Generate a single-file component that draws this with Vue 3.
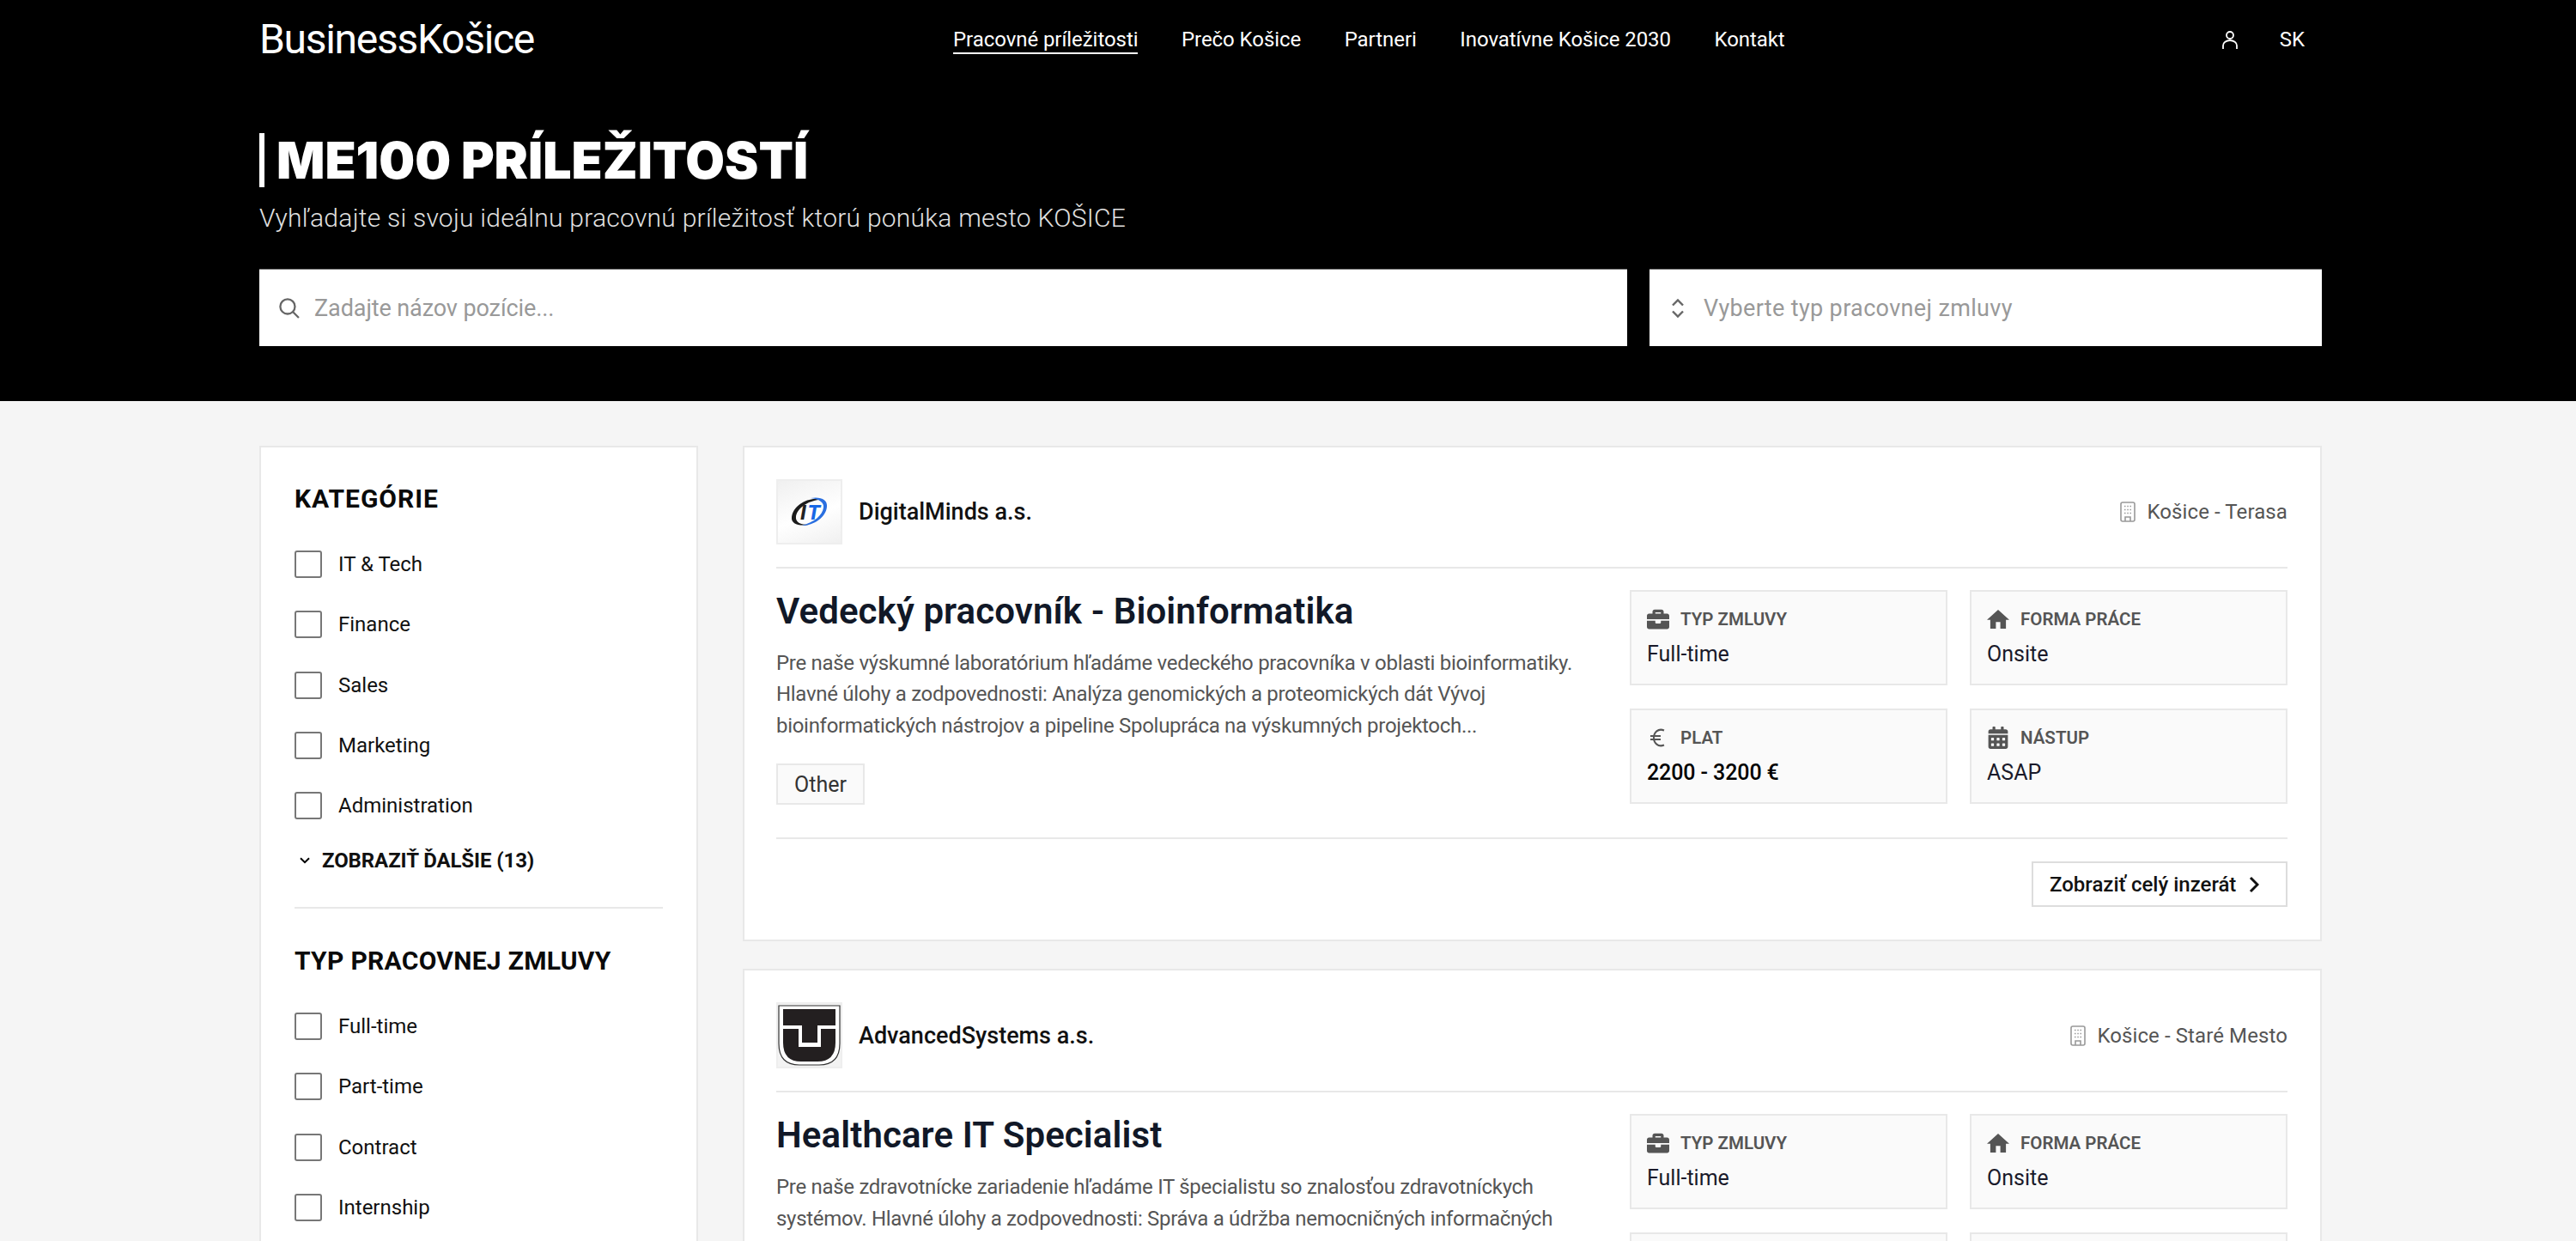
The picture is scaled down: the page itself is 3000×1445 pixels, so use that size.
<script setup>
const nav = ['Pracovné príležitosti', 'Prečo Košice', 'Partneri', 'Inovatívne Košice 2030', 'Kontakt']
const categories = ['IT & Tech', 'Finance', 'Sales', 'Marketing', 'Administration']
const contracts = ['Full-time', 'Part-time', 'Contract', 'Internship']
const jobs = [
  {
    company: 'DigitalMinds a.s.', logo: 'it', place: 'Košice - Terasa',
    title: 'Vedecký pracovník - Bioinformatika',
    lines: [
      'Pre naše výskumné laboratórium hľadáme vedeckého pracovníka v oblasti bioinformatiky.',
      'Hlavné úlohy a zodpovednosti: Analýza genomických a proteomických dát Vývoj',
      'bioinformatických nástrojov a pipeline Spolupráca na výskumných projektoch...'
    ],
    pay: '2200 - 3200 €'
  },
  {
    company: 'AdvancedSystems a.s.', logo: 'tu', place: 'Košice - Staré Mesto',
    title: 'Healthcare IT Specialist',
    lines: [
      'Pre naše zdravotnícke zariadenie hľadáme IT špecialistu so znalosťou zdravotníckych',
      'systémov. Hlavné úlohy a zodpovednosti: Správa a údržba nemocničných informačných',
      'systémov Podpora používateľov a riešenie technických problémov...'
    ],
    pay: '2000 - 3000 €'
  }
]
</script>

<template>
  <div class="page">
    <header class="hero">
      <div class="wrap">
        <div class="topbar">
          <div class="brand">BusinessKošice</div>
          <nav class="nav">
            <a v-for="(item, i) in nav" :key="item" class="nav-link" :class="{ active: i === 0 }">{{ item }}</a>
          </nav>
          <div class="tools">
            <svg class="user" viewBox="0 0 18 21" fill="none" stroke="#fff" stroke-width="1.8">
              <circle cx="9" cy="5" r="4" />
              <path d="M1 21v-4a8 6 0 0 1 16 0v4" />
            </svg>
            <span class="lang">SK</span>
          </div>
        </div>
        <h1 class="title">ME100 PRÍLEŽITOSTÍ</h1>
        <p class="subtitle">Vyhľadajte si svoju ideálnu pracovnú príležitosť ktorú ponúka mesto KOŠICE</p>
        <div class="searches">
          <div class="field field-main">
            <svg class="search-icon" viewBox="0 0 24 24" fill="none" stroke="#666" stroke-width="2.2">
              <circle cx="10.5" cy="10.5" r="8.2" />
              <path d="M16.5 16.5 23 23" />
            </svg>
            <span>Zadajte názov pozície...</span>
          </div>
          <div class="field field-side">
            <svg class="updown" viewBox="0 0 16 24" fill="none" stroke="#666" stroke-width="2.4">
              <path d="M2 8.5 8 2.5l6 6M2 15.5l6 6 6-6" />
            </svg>
            <span>Vyberte typ pracovnej zmluvy</span>
          </div>
        </div>
      </div>
    </header>

    <main class="wrap content">
      <aside class="filters">
        <h2 class="filter-title first">KATEGÓRIE</h2>
        <ul class="checks">
          <li v-for="c in categories" :key="c"><span class="box"></span>{{ c }}</li>
        </ul>
        <div class="more">
          <svg viewBox="0 0 12 8" fill="none" stroke="#000" stroke-width="2"><path d="M1 1.2 6 6.2l5-5" /></svg>
          <span>ZOBRAZIŤ ĎALŠIE (13)</span>
        </div>
        <hr class="filter-line" />
        <h2 class="filter-title second">TYP PRACOVNEJ ZMLUVY</h2>
        <ul class="checks">
          <li v-for="c in contracts" :key="c"><span class="box"></span>{{ c }}</li>
        </ul>
      </aside>

      <section class="jobs">
        <article v-for="job in jobs" :key="job.title" class="job">
          <div class="job-head">
            <div class="logo" :class="'logo-' + job.logo">
              <svg v-if="job.logo === 'it'" viewBox="2 2 73 72">
                <path d="M52 24C38 20 20 30 18 44 17 52 26 55 38 53 28 53 22 50 23 43 25 32 40 24 52 24Z" fill="#1c1c1c" />
                <path d="M40 22C52 20 60 24 59 32 58 44 44 54 30 54 44 50 54 42 55 33 56 27 50 23 40 22Z" fill="#2a6fe0" />
                <text class="it-mark" x="28" y="47"><tspan fill="#222">I</tspan><tspan fill="#1767e6" dx="2">T</tspan></text>
              </svg>
              <svg v-else viewBox="2 2 73 73">
                <path d="M3 4h71v44q0 25-24 25H27Q3 73 3 48z" fill="#fff" stroke="#333" stroke-width="1.2" />
                <path d="M8 8h61v19H48v20H30V27H8z" fill="#231f20" />
                <path d="M8 31h18v21h26V31h17v16q0 22-21 22H29Q8 69 8 47z" fill="#231f20" />
              </svg>
            </div>
            <div class="company">{{ job.company }}</div>
            <div class="place">
              <svg class="building" viewBox="0 0 18 24" fill="none" stroke="#999" stroke-width="1.6">
                <rect x="1" y="1" width="16" height="22" rx="2" />
                <path d="M5 5.500h1.500M8.300 5.500h1.500M11.500 5.500H13M5 9.500h1.500M8.300 9.500h1.500M11.500 9.500H13M5 13.500h1.500M8.300 13.500h1.500M11.500 13.500H13" stroke-width="1.400" />
                <path d="M6 23v-5h6v5" />
              </svg>
              {{ job.place }}
            </div>
          </div>
          <div class="job-body">
            <div class="job-text">
              <h3 class="job-title">{{ job.title }}</h3>
              <p class="job-desc"><span v-for="l in job.lines" :key="l">{{ l }}</span></p>
              <span class="tag">Other</span>
            </div>
            <div class="facts">
              <div class="fact">
                <div class="fact-label">
                  <svg viewBox="0 0 512 512"><path d="M320 336c0 8.840-7.160 16-16 16h-96c-8.840 0-16-7.160-16-16v-48H0v144c0 25.600 22.400 48 48 48h416c25.600 0 48-22.400 48-48V288H320v48zm144-208h-80V80c0-25.600-22.400-48-48-48H176c-25.600 0-48 22.400-48 48v48H48c-25.600 0-48 22.400-48 48v80h512v-80c0-25.600-22.400-48-48-48zm-144 0H192V96h128v32z" /></svg>
                  <span>TYP ZMLUVY</span>
                </div>
                <div class="fact-value">Full-time</div>
              </div>
              <div class="fact">
                <div class="fact-label">
                  <svg viewBox="2 3 20 17"><path d="M10 20v-6h4v6h5v-8h3L12 3 2 12h3v8z" /></svg>
                  <span>FORMA PRÁCE</span>
                </div>
                <div class="fact-value">Onsite</div>
              </div>
              <div class="fact">
                <div class="fact-label">
                  <svg class="euro" viewBox="0 0 26 24" fill="none" stroke="#555" stroke-width="2">
                    <path d="M20 3.500C13 .5 8 6 8 12s5 11.500 12 8.500M4 10h12M4 14h12" />
                  </svg>
                  <span>PLAT</span>
                </div>
                <div class="fact-value strong">{{ job.pay }}</div>
              </div>
              <div class="fact">
                <div class="fact-label">
                  <svg viewBox="-32 0 512 512"><path d="M0 464c0 26.500 21.500 48 48 48h352c26.500 0 48-21.500 48-48V192H0v272zm320-196c0-6.600 5.400-12 12-12h40c6.600 0 12 5.400 12 12v40c0 6.600-5.400 12-12 12h-40c-6.600 0-12-5.400-12-12v-40zm0 128c0-6.600 5.400-12 12-12h40c6.600 0 12 5.400 12 12v40c0 6.600-5.400 12-12 12h-40c-6.600 0-12-5.400-12-12v-40zM192 268c0-6.600 5.400-12 12-12h40c6.600 0 12 5.400 12 12v40c0 6.600-5.400 12-12 12h-40c-6.600 0-12-5.400-12-12v-40zm0 128c0-6.600 5.400-12 12-12h40c6.600 0 12 5.400 12 12v40c0 6.600-5.400 12-12 12h-40c-6.600 0-12-5.400-12-12v-40zM64 268c0-6.600 5.400-12 12-12h40c6.600 0 12 5.400 12 12v40c0 6.600-5.400 12-12 12H76c-6.600 0-12-5.400-12-12v-40zm0 128c0-6.600 5.400-12 12-12h40c6.600 0 12 5.400 12 12v40c0 6.600-5.400 12-12 12H76c-6.600 0-12-5.400-12-12v-40zM400 64h-48V16c0-8.800-7.200-16-16-16h-32c-8.800 0-16 7.200-16 16v48H160V16c0-8.800-7.200-16-16-16h-32c-8.800 0-16 7.200-16 16v48H48C21.500 64 0 85.500 0 112v48h448v-48c0-26.500-21.500-48-48-48z" /></svg>
                  <span>NÁSTUP</span>
                </div>
                <div class="fact-value">ASAP</div>
              </div>
            </div>
          </div>
          <div class="job-foot">
            <button class="open">
              Zobraziť celý inzerát
              <svg viewBox="0 0 12 20" fill="none" stroke="#111" stroke-width="3"><path d="M2 2l8 8-8 8" /></svg>
            </button>
          </div>
        </article>
      </section>
    </main>
  </div>
</template>

<style>
html, body { margin: 0; background: #f5f5f5; }
</style>

<style scoped>
* { box-sizing: border-box; }
.page {
  height: 1445px;
  overflow: hidden;
  background: #f5f5f5;
  font-family: Roboto, "Noto Sans", sans-serif;
  color: #111;
  font-size: 24px;
}
.wrap { width: 2402px; margin-left: 302px; }
.hero { background: #000; color: #fff; height: 467px; }
.topbar { height: 92px; display: flex; align-items: center; position: relative; }
.brand { width: 808px; font-size: 48px; letter-spacing: -1.300px; font-weight: 400; line-height: 92px; }
.nav { display: flex; gap: 50.500px; }
.nav-link { font-size: 24px; letter-spacing: -0.06px; line-height: 30px; border-bottom: 2px solid transparent; margin-top: 2px; }
.nav-link.active { border-bottom-color: #fff; }
.tools { margin-left: auto; display: flex; align-items: center; gap: 49px; padding-right: 20px; }
.user { width: 18px; height: 21px; display: block; }
.lang { font-size: 24px; }
.title {
  margin: 63px 0 0;
  border-left: 6px solid #fff;
  padding-left: 14px;
  height: 63px;
  font-family: Inter, Roboto, sans-serif;
  font-size: 59px;
  line-height: 63px;
  font-weight: 900;
  letter-spacing: 0;
}
.subtitle { margin: 16px 0 0; font-size: 30px; letter-spacing: 0.25px; line-height: 40px; font-weight: 300; color: #e0e0e0; }
.searches { display: flex; gap: 26px; margin-top: 39px; }
.field {
  height: 90px;
  background: #fff;
  display: flex;
  align-items: center;
  color: #999;
  font-size: 27px;
  border-top: 1px solid #777;
}
.field-main { width: 1593px; padding-left: 22px; gap: 17px; letter-spacing: -0.1px; }
.field-side { width: 783px; padding-left: 25px; gap: 22px; letter-spacing: 0.35px; }
.search-icon { width: 25px; height: 25px; }
.updown { width: 16px; height: 24px; }
.content { display: grid; grid-template-columns: 511px 1839px; gap: 52px; padding-top: 52px; }
.filters { background: #fff; border: 2px solid #e8e8e8; padding: 41px 39px 40px; }
.filter-title { margin: 0; font-size: 30px; line-height: 38px; font-weight: 700; color: #0a0a0a; }
.filter-title.first { letter-spacing: 1px; }
.filter-title.second { margin-top: 42px; letter-spacing: 0.3px; }
.checks { list-style: none; margin: 41px 0 0; padding: 0; display: flex; flex-direction: column; gap: 38.300px; }
.checks li { display: flex; align-items: center; height: 32px; font-size: 24px; }
.box { width: 32px; height: 32px; border: 2px solid #777; border-radius: 3px; margin-right: 19px; }
.more { display: flex; align-items: center; margin-top: 30px; height: 36px; font-size: 24px; font-weight: 700; letter-spacing: -0.1px; }
.more svg { width: 12px; height: 8px; margin: 0 14px 0 6px; }
.filter-line { border: 0; height: 2px; background: #e8e8e8; margin: 36px 0 0; }
.jobs { display: flex; flex-direction: column; gap: 32px; }
.job { background: #fff; border: 2px solid #e8e8e8; padding: 37px 38px 38px 37px; }
.job-head { display: flex; align-items: center; padding-bottom: 26px; border-bottom: 2px solid #e8e8e8; }
.logo { width: 77px; height: 76px; border: 2px solid #eee; }
.logo-it { background: linear-gradient(160deg, #f0f0f0, #fff 55%, #f0f0f0); }
.logo-tu { background: #f3f3f3; height: 77px; }
.logo svg { width: 73px; height: 72px; display: block; }
.logo-tu svg { height: 73px; }
.it-mark { font-family: Roboto, sans-serif; font-size: 24px; font-weight: 800; font-style: italic; }
.company { margin-left: 19px; font-size: 27px; font-weight: 500; }
.place { margin-left: auto; display: flex; align-items: center; gap: 13px; color: #555; font-size: 24px; letter-spacing: 0.1px; }
.building { width: 18px; height: 24px; }
.job-body { display: flex; gap: 26px; padding-top: 25px; padding-bottom: 38px; border-bottom: 2px solid #e8e8e8; }
.job-text { flex: 1; min-width: 0; }
.job-title { margin: 0; font-size: 42px; line-height: 50px; font-weight: 600; color: #111827; letter-spacing: 0.1px; }
.job-desc { margin: 17px 0 0; font-size: 24px; letter-spacing: -0.3px; line-height: 36.400px; color: #555; }
.job-desc span { display: block; white-space: nowrap; }
.tag {
  display: inline-flex;
  align-items: center;
  height: 48px;
  margin-top: 26px;
  padding: 0 19px;
  font-size: 25px;
  background: #fafafa;
  border: 2px solid #e8e8e8;
  color: #333;
}
.facts { width: 766px; display: grid; grid-template-columns: 370px 370px; grid-auto-rows: 111px; gap: 27px 26px; }
.fact { background: #fafafa; border: 2px solid #e8e8e8; padding: 19px 18px 0; }
.fact-label { display: flex; align-items: center; height: 26px; gap: 13px; color: #555; font-size: 20.500px; font-weight: 600; }
.fact-label svg { width: 26px; height: 26px; fill: #555; flex: none; }
.fact-label .euro { fill: none; }
.fact-value { margin-top: 13px; font-size: 25px; line-height: 30px; color: #1a1a2a; }
.fact-value.strong { font-weight: 500; color: #000; letter-spacing: -0.1px; }
.job-foot { display: flex; justify-content: flex-end; padding-top: 26px; }
.open {
  width: 298px;
  height: 53px;
  display: flex;
  align-items: center;
  gap: 15px;
  padding: 0 0 0 19px;
  background: #fff;
  border: 2px solid #ddd;
  font: 500 24px Roboto, sans-serif;
  color: #111;
}
.open svg { width: 12px; height: 20px; }
</style>
